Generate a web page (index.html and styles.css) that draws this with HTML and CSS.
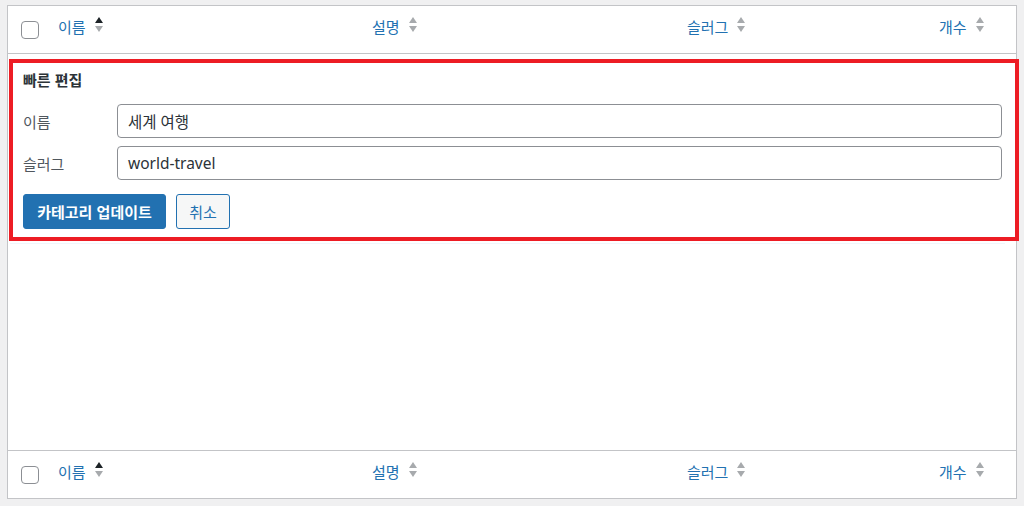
FILE: index.html
```html
<!DOCTYPE html>
<html lang="ko">
<head>
<meta charset="utf-8">
<title>카테고리 빠른 편집</title>
<link rel="stylesheet" href="styles.css">
</head>
<body>
<div class="card">
  <div class="row head">
    <div class="cell cb"><span class="check"></span></div>
    <div class="cell c-name"><a class="sort">이름<svg class="arrows" viewBox="0 0 8 16" width="8" height="16"><path d="M0 6 L4 0 L8 6 Z" fill="#1d2327"/><path d="M0 9 L4 15 L8 9 Z" fill="#a7aaad"/></svg></a></div>
    <div class="cell c-desc"><a class="sort">설명<svg class="arrows" viewBox="0 0 8 16" width="8" height="16"><path d="M0 6 L4 0 L8 6 Z" fill="#a7aaad"/><path d="M0 9 L4 15 L8 9 Z" fill="#a7aaad"/></svg></a></div>
    <div class="cell c-slug"><a class="sort">슬러그<svg class="arrows" viewBox="0 0 8 16" width="8" height="16"><path d="M0 6 L4 0 L8 6 Z" fill="#a7aaad"/><path d="M0 9 L4 15 L8 9 Z" fill="#a7aaad"/></svg></a></div>
    <div class="cell c-count"><a class="sort">개수<svg class="arrows" viewBox="0 0 8 16" width="8" height="16"><path d="M0 6 L4 0 L8 6 Z" fill="#a7aaad"/><path d="M0 9 L4 15 L8 9 Z" fill="#a7aaad"/></svg></a></div>
  </div>

  <div class="quick">
    <div class="q-title">빠른 편집</div>
    <div class="fields">
      <label class="field"><span class="lbl">이름</span><span class="input">세계 여행</span></label>
      <label class="field"><span class="lbl">슬러그</span><span class="input">world-travel</span></label>
    </div>
    <div class="actions">
      <span class="btn primary">카테고리 업데이트</span>
      <span class="btn secondary">취소</span>
    </div>
  </div>

  <div class="spacer"></div>

  <div class="row foot">
    <div class="cell cb"><span class="check"></span></div>
    <div class="cell c-name"><a class="sort">이름<svg class="arrows" viewBox="0 0 8 16" width="8" height="16"><path d="M0 6 L4 0 L8 6 Z" fill="#1d2327"/><path d="M0 9 L4 15 L8 9 Z" fill="#a7aaad"/></svg></a></div>
    <div class="cell c-desc"><a class="sort">설명<svg class="arrows" viewBox="0 0 8 16" width="8" height="16"><path d="M0 6 L4 0 L8 6 Z" fill="#a7aaad"/><path d="M0 9 L4 15 L8 9 Z" fill="#a7aaad"/></svg></a></div>
    <div class="cell c-slug"><a class="sort">슬러그<svg class="arrows" viewBox="0 0 8 16" width="8" height="16"><path d="M0 6 L4 0 L8 6 Z" fill="#a7aaad"/><path d="M0 9 L4 15 L8 9 Z" fill="#a7aaad"/></svg></a></div>
    <div class="cell c-count"><a class="sort">개수<svg class="arrows" viewBox="0 0 8 16" width="8" height="16"><path d="M0 6 L4 0 L8 6 Z" fill="#a7aaad"/><path d="M0 9 L4 15 L8 9 Z" fill="#a7aaad"/></svg></a></div>
  </div>
</div>
</body>
</html>
```

FILE: styles.css
```css
* { box-sizing: border-box; }
html, body { margin: 0; }
body {
  background: #f0f0f1;
  padding: 5px 7px 0 7px;
  font-family: "Noto Sans", "Noto Sans CJK KR", sans-serif;
  color: #1d2327;
  width: 1024px;
  height: 506px;
  overflow: hidden;
}
.card {
  width: 1010px;
  height: 494px;
  background: #fff;
  border: 1px solid #c3c4c7;
  display: flex;
  flex-direction: column;
}
.row {
  display: grid;
  grid-template-columns: 50px 314px 315px 252px 1fr;
  height: 48px;
  flex: none;
}
.head { border-bottom: 1px solid #c3c4c7; }
.foot { border-top: 1px solid #c3c4c7; }
.cell { display: flex; align-items: flex-start; }
.cb { padding: 15px 0 0 13px; }
.check {
  display: block;
  width: 18px;
  height: 18px;
  border: 1px solid #8c8f94;
  border-radius: 4px;
  background: #fff;
}
.c-name, .c-desc, .c-slug, .c-count { padding-top: 11px; }
.sort {
  display: flex;
  align-items: center;
  gap: 9px;
  color: #2271b1;
  font-size: 15px;
  line-height: 20px;
  font-family: "Noto Sans CJK KR", sans-serif;
  text-decoration: none;
}
.arrows { display: block; margin-top: -4px; }

.quick {
  flex: none;
  margin: 5px -3px 0 1px;
  height: 182px;
  border: 4px solid #ed1c24;
  padding: 6px 13px 9px 10px;
}
.q-title {
  font-family: "Noto Sans CJK KR", sans-serif;
  font-weight: 700;
  font-size: 15px;
  line-height: 22px;
  color: #2c3338;
}
.fields {
  margin-top: 13px;
  display: flex;
  flex-direction: column;
  gap: 8px;
}
.field { display: flex; align-items: center; }
.lbl {
  width: 94px;
  flex: none;
  font-family: "Noto Sans CJK KR", sans-serif;
  font-size: 15px;
  color: #50575e;
}
.input {
  flex: 1;
  height: 34px;
  border: 1px solid #8c8f94;
  border-radius: 4px;
  padding: 0 10px;
  display: flex;
  align-items: center;
  font-size: 15.5px;
  color: #2c3338;
  font-family: "Noto Sans", "Noto Sans CJK KR", sans-serif;
}
.actions {
  margin-top: 14px;
  display: flex;
  gap: 10px;
}
.btn {
  height: 35px;
  display: flex;
  align-items: center;
  border-radius: 3px;
  font-size: 15px;
  font-family: "Noto Sans CJK KR", sans-serif;
}
.primary {
  background: #2271b1;
  border: 1px solid #2271b1;
  color: #fff;
  font-weight: 700;
  width: 143px;
  justify-content: center;
}
.secondary {
  background: #f6f7f7;
  border: 1px solid #2271b1;
  color: #2271b1;
  width: 54px;
  justify-content: center;
}
.spacer {
  flex: 1;
  margin: 2px 11px 0 2px;
  border-top: 1px solid #f0f6fc;
}
```
